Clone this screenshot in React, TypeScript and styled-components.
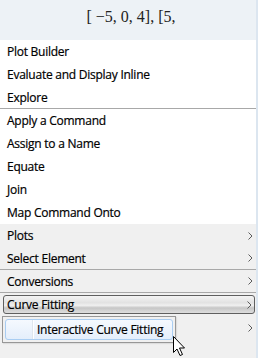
import React from 'react';
import styled, { createGlobalStyle, css } from 'styled-components';

const GlobalStyle = createGlobalStyle`
  html, body {
    margin: 0;
    padding: 0;
    background: #f0f0f0;
  }
`;

const Menu = styled.div`
  position: relative;
  width: 258px;
  height: 358px;
  overflow: hidden;
  box-sizing: border-box;
  border-right: 2px solid #dce6f0;
  background: #f0f0f0;
  font-family: 'Open Sans', 'Noto Sans', sans-serif;
  font-size: 12px;
  color: #000;
`;

const Header = styled.div`
  height: 40px;
  display: flex;
  align-items: center;
  justify-content: center;
  padding: 0 0 6px 6px;
  box-sizing: border-box;
  background: #edf2f6;
  font-family: 'Liberation Serif', 'Times New Roman', serif;
  font-size: 16px;
  color: #222;
`;

const Section = styled.div<{ $white?: boolean }>`
  display: flex;
  flex-direction: column;
  background: ${(p) => (p.$white ? '#ffffff' : '#f0f0f0')};
`;

const Item = styled.div<{ $sep?: boolean; $active?: boolean }>`
  height: 23px;
  box-sizing: border-box;
  display: flex;
  align-items: center;
  justify-content: space-between;
  padding: 0 3px 0 7px;
  white-space: nowrap;
  ${(p) =>
    p.$sep &&
    css`
      border-bottom: 1px solid #a8a8a8;
    `}
  ${(p) =>
    p.$active &&
    css`
      margin: 2px 1px 2px 3px;
      height: 19px;
      padding: 0 2px 0 3px;
      border: 1px solid #5f5f5f;
      border-radius: 3px;
      background: linear-gradient(
        to bottom,
        #f4f4f4 0%,
        #e2e2e2 40%,
        #f0f0f0 55%,
        #c6c6c6 70%,
        #dedede 100%
      );
    `}
`;

const Label = styled.span`
  letter-spacing: -0.25px;
  -webkit-text-stroke: 0.2px #000;
`;

const Submenu = styled.div`
  position: absolute;
  left: 2px;
  top: 316px;
  width: 174px;
  height: 27px;
  box-sizing: border-box;
  padding: 2px;
  border: 1px solid #979797;
  background: #f0f0f0;
  box-shadow: 1px 1px 1px rgba(0, 0, 0, 0.08);
`;

const SubItem = styled.div`
  height: 21px;
  box-sizing: border-box;
  display: flex;
  align-items: center;
  border: 1px solid #a9cdf2;
  border-radius: 3px;
  background: linear-gradient(to bottom, #f5f9fe 0%, #e4eefb 100%);
`;

const Gutter = styled.div`
  width: 26px;
  align-self: stretch;
  border-right: 1px solid #dfe6ee;
  box-shadow: 1px 0 0 #ffffff;
  margin-right: 4px;
`;

const Cursor = styled.svg`
  position: absolute;
  left: 172px;
  top: 335px;
`;

function Arrow() {
  return (
    <svg width="5" height="8" viewBox="0 0 5 8">
      <polyline points="0.5,0.5 4,4 0.5,7.5" fill="none" stroke="#5c5c5c" strokeWidth="1" />
    </svg>
  );
}

const whiteItems: { label: string; sep?: boolean }[] = [
  { label: 'Plot Builder' },
  { label: 'Evaluate and Display Inline' },
  { label: 'Explore', sep: true },
  { label: 'Apply a Command' },
  { label: 'Assign to a Name' },
  { label: 'Equate' },
  { label: 'Join' },
  { label: 'Map Command Onto' },
];

const grayItems: { label: string; sep?: boolean; active?: boolean }[] = [
  { label: 'Plots' },
  { label: 'Select Element', sep: true },
  { label: 'Conversions', sep: true },
  { label: 'Curve Fitting', active: true },
  { label: '' },
  { label: '' },
];

export default function App() {
  return (
    <>
      <GlobalStyle />
      <Menu>
        <Header>[ −5, 0, 4], [5,</Header>
        <Section $white>
          {whiteItems.map((it) => (
            <Item key={it.label} $sep={it.sep}>
              <Label>{it.label}</Label>
            </Item>
          ))}
        </Section>
        <Section>
          {grayItems.map((it, i) => (
            <Item key={i} $sep={it.sep} $active={it.active}>
              <Label>{it.label}</Label>
              {i < 5 && <Arrow />}
            </Item>
          ))}
        </Section>
        <Submenu>
          <SubItem>
            <Gutter />
            <Label>Interactive Curve Fitting</Label>
          </SubItem>
        </Submenu>
        <Cursor width="14" height="22" viewBox="0 0 14 22">
          <path
            d="M1.5 1.5 L1.5 17.5 L5 14 L8 20.5 L10.5 19.5 L7.5 13 L12.5 13 Z"
            fill="#ffffff"
            stroke="#000000"
            strokeWidth="1"
            strokeLinejoin="miter"
          />
        </Cursor>
      </Menu>
    </>
  );
}
